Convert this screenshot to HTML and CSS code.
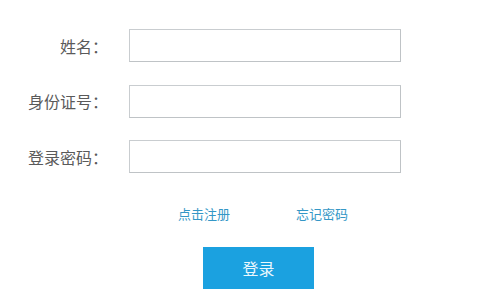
FILE: index.html
```html
<!DOCTYPE html>
<html lang="zh-CN">
<head>
<meta charset="utf-8">
<title>登录</title>
<link rel="stylesheet" href="styles.css">
</head>
<body>
<form class="login">
  <div class="fields">
    <div class="row">
      <label class="label">姓名：</label>
      <input class="field" type="text">
    </div>
    <div class="row">
      <label class="label">身份证号：</label>
      <input class="field" type="text">
    </div>
    <div class="row">
      <label class="label">登录密码：</label>
      <input class="field" type="password">
    </div>
  </div>
  <div class="links">
    <a class="link" href="#">点击注册</a>
    <a class="link" href="#">忘记密码</a>
  </div>
  <div class="actions">
    <button class="btn" type="button">登录</button>
  </div>
</form>
</body>
</html>
```
FILE: styles.css
```css
html, body {
  margin: 0;
  padding: 0;
  background: #ffffff;
}
body {
  font-family: "Noto Sans CJK SC", "Noto Sans", sans-serif;
  width: 500px;
  height: 300px;
  overflow: hidden;
}
.login {
  display: flex;
  flex-direction: column;
  padding-top: 29px;
  margin: 0;
}
.fields {
  display: flex;
  flex-direction: column;
  gap: 22.5px;
}
.row {
  display: flex;
  align-items: center;
  gap: 21px;
  height: 33px;
}
.label {
  width: 108px;
  text-align: right;
  font-size: 16px;
  color: #5a5a5a;
  line-height: 20px;
}
.field {
  box-sizing: border-box;
  width: 272px;
  height: 33px;
  margin: 0;
  border: 1px solid #c9cdd0;
  border-right-color: #bfc3c6;
  border-bottom-color: #bfc3c6;
  background: #ffffff;
  outline: none;
  padding: 0 8px;
}
.links {
  display: flex;
  gap: 66px;
  padding-left: 178px;
  margin-top: 33px;
  height: 16px;
}
.link {
  font-size: 13px;
  line-height: 16px;
  color: #3497c6;
  text-decoration: none;
}
.actions {
  display: flex;
  padding-left: 203px;
  margin-top: 25px;
}
.btn {
  width: 111px;
  height: 42px;
  border: 0;
  margin: 0;
  padding: 0;
  background: #1ba1e0;
  color: #eaf7fd;
  font-family: "Noto Sans CJK SC", "Noto Sans", sans-serif;
  font-size: 16px;
  cursor: pointer;
}
```
